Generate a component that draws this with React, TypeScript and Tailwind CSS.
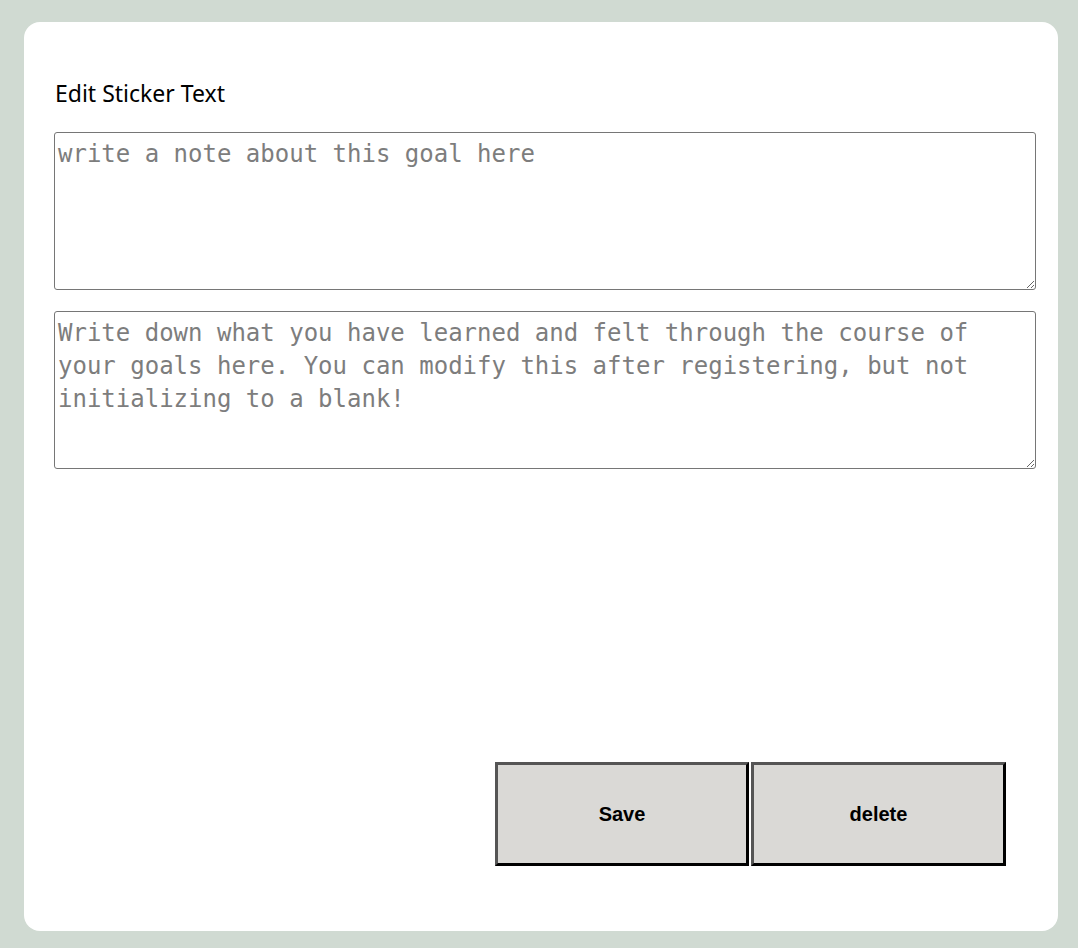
export default function App() {
  return (
    <div className="min-h-[948px] w-full bg-[#d0dad2] pt-[22px] pr-[20px] pb-[17px] pl-[24px]">
      <div className="flex h-[909px] flex-col rounded-[16px] bg-white pt-[55px] pr-[22px] pl-[30px]">
        <label className="mb-[23px] block pl-[1px] text-[23px] leading-[32px] text-black [font-family:'Noto_Sans','Open_Sans',sans-serif]">
          Edit Sticker Text
        </label>
        <textarea
          placeholder="write a note about this goal here"
          className="block h-[158px] w-full rounded-[3px] border border-[#767676] px-[3px] pt-[5px] pb-[3px] text-[24px] leading-[33px] text-black placeholder:text-[#7d7d7d] [font-family:'DejaVu_Sans_Mono',monospace]"
        />
        <textarea
          placeholder="Write down what you have learned and felt through the course of your goals here. You can modify this after registering, but not initializing to a blank!"
          className="mt-[21px] block h-[158px] w-full rounded-[3px] border border-[#767676] px-[3px] pt-[5px] pb-[3px] text-[24px] leading-[33px] text-black placeholder:text-[#7d7d7d] [font-family:'DejaVu_Sans_Mono',monospace]"
        />
        <div className="mt-[293px] flex justify-end gap-[2px] pr-[30px]">
          <button className="h-[104px] w-[254px] border-[3px] border-t-[#555555] border-l-[#555555] border-r-black border-b-black bg-[#dad9d6] text-[20px] font-bold text-black [font-family:'Liberation_Sans',Arial,sans-serif]">
            Save
          </button>
          <button className="h-[104px] w-[255px] border-[3px] border-t-[#555555] border-l-[#555555] border-r-black border-b-black bg-[#dad9d6] text-[20px] font-bold text-black [font-family:'Liberation_Sans',Arial,sans-serif]">
            delete
          </button>
        </div>
      </div>
    </div>
  );
}
